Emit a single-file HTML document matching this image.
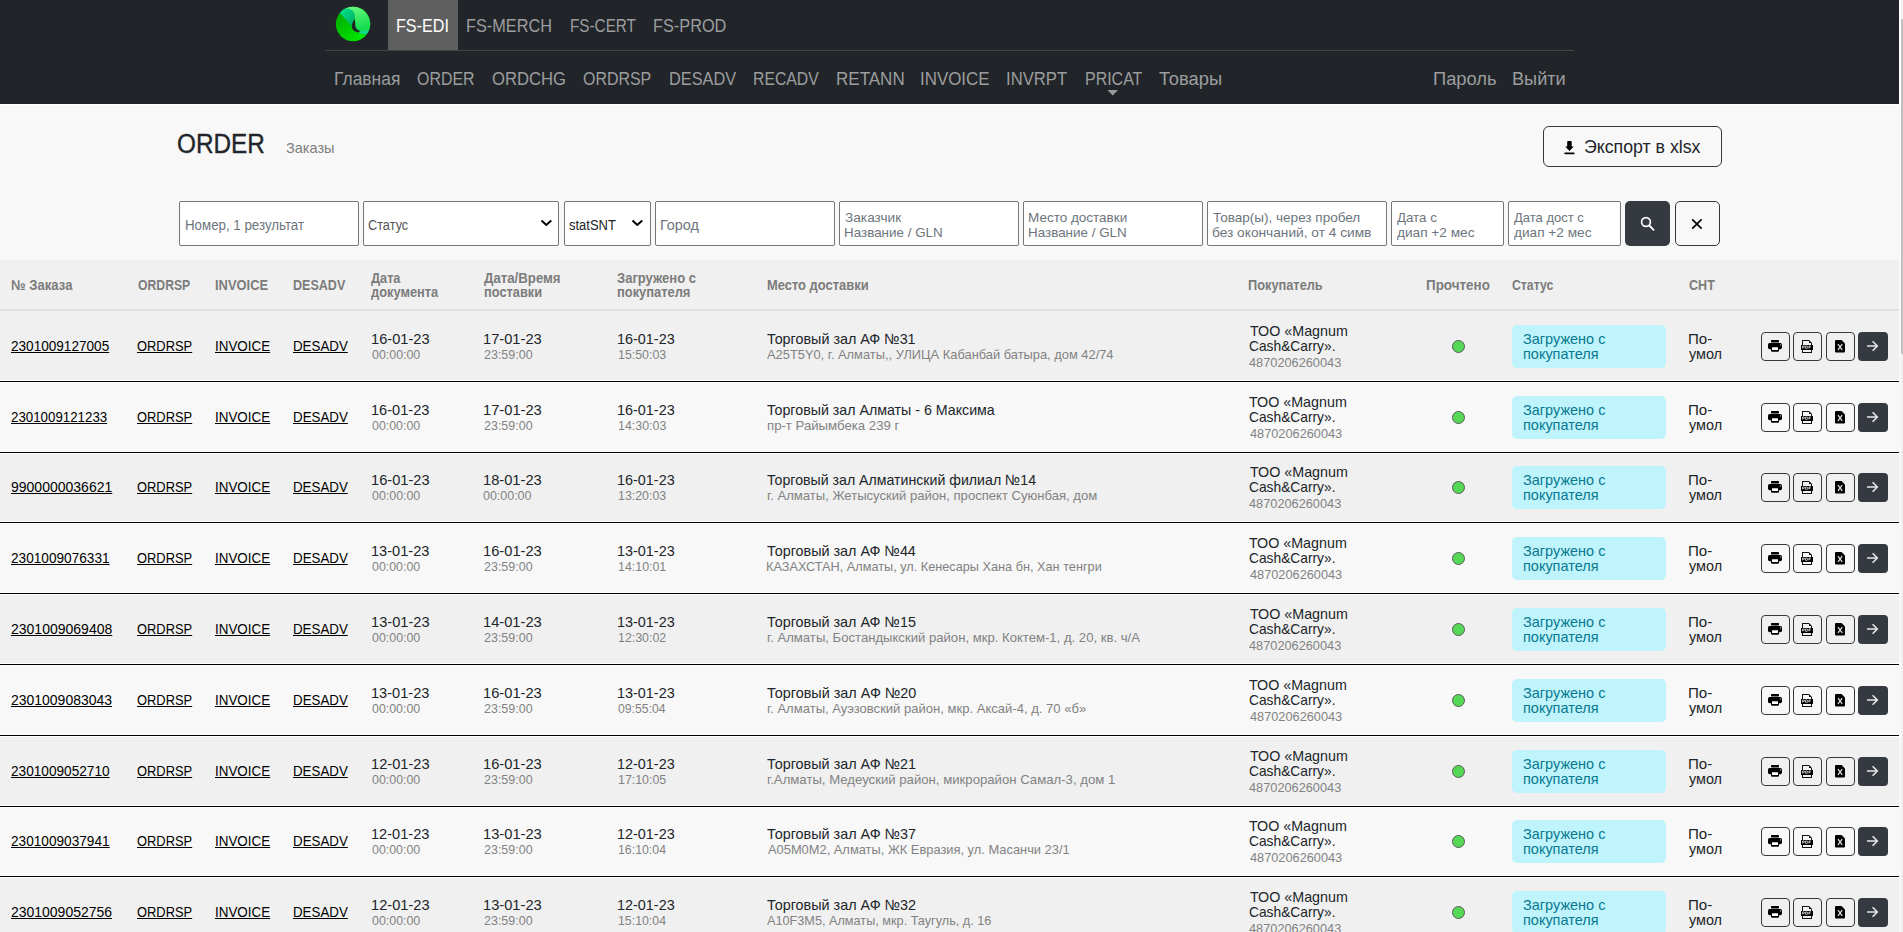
<!DOCTYPE html>
<html><head><meta charset="utf-8"><title>ORDER</title>
<style>
html,body{margin:0;padding:0;}
body{width:1903px;height:932px;overflow:hidden;position:relative;background:#f8f8f8;font-family:"Liberation Sans",sans-serif;}
.t{position:absolute;white-space:nowrap;line-height:1;transform-origin:0 0;}
.r{position:absolute;}
</style></head><body>
<div class="r" style="left:0px;top:0px;width:1899px;height:104px;background:#212529;"></div>
<div class="r" style="left:0px;top:104px;width:1899px;height:1px;background:#ffffff;"></div>
<div class="r" style="left:1899px;top:0px;width:2px;height:105px;background:#ffffff;"></div>
<div class="r" style="left:1901px;top:0px;width:2px;height:932px;background:#f1f1f1;"></div>
<div class="r" style="left:1901px;top:19px;width:2px;height:335px;background:#c1c1c1;"></div>
<svg class="r" style="left:335px;top:6px" width="36" height="36" viewBox="0 0 36 36">
<defs>
<linearGradient id="g1" x1="0" y1="0" x2="0.8" y2="1"><stop offset="0" stop-color="#009e00"/><stop offset="1" stop-color="#00ee00"/></linearGradient>
<linearGradient id="g2" x1="0" y1="0" x2="0.3" y2="1"><stop offset="0" stop-color="#74fb84"/><stop offset="1" stop-color="#14de50"/></linearGradient>
<linearGradient id="g3" x1="0" y1="0" x2="1" y2="1"><stop offset="0" stop-color="#00ec90"/><stop offset="1" stop-color="#00a860"/></linearGradient>
<clipPath id="cc"><circle cx="18" cy="18" r="17.2"/></clipPath>
</defs>
<g clip-path="url(#cc)">
<rect x="0" y="0" width="36" height="36" fill="url(#g1)"/>
<path d="M2 4 C6 1 15 0 19 6 C20.5 9 20 12 19.4 13.2 C17.8 15.5 16.8 18 16.8 20.6 C12 15 7 9 2 4Z" fill="url(#g3)"/>
<path d="M10 2.5 C15 2 19 4.5 19.7 8.5 C20.3 12 20.2 16 20.3 19.5 C20.5 22.5 23 24.6 25.6 25 C29 25.5 32 25 36 23.5 L36 -1 L10 -1Z" fill="url(#g2)"/>
<path d="M19.4 13.2 C17.8 15.5 16.8 18 16.8 20.6 C16.8 23.8 19.8 26 23.6 26.6 L25.6 25 C23 24.6 20.5 22.5 20.3 19.5 C20.2 17 20.2 15 19.4 13.2Z" fill="#212529"/>
<path d="M23.6 26.6 C27.5 28.6 32 28.4 36 26.6 L36 23.5 C32 25 29 25.5 25.6 25Z" fill="#19d49a"/>
</g>
</svg>
<div class="r" style="left:388px;top:0px;width:70px;height:50px;background:#5f5f5f;"></div>
<div class="r" style="left:325px;top:50px;width:1249px;height:1px;background:#444444;"></div>
<div class="t" style="left:396.42px;top:17px;font-size:18px;color:#ffffff;transform:scaleX(0.8965);">FS-EDI</div>
<div class="t" style="left:466.45px;top:17px;font-size:18px;color:#9c9d9f;transform:scaleX(0.9041);">FS-MERCH</div>
<div class="t" style="left:569.54px;top:17px;font-size:18px;color:#9c9d9f;transform:scaleX(0.8489);">FS-CERT</div>
<div class="t" style="left:653.45px;top:17px;font-size:18px;color:#9c9d9f;transform:scaleX(0.9061);">FS-PROD</div>
<div class="t" style="left:333.52px;top:70px;font-size:18px;color:#9c9d9f;transform:scaleX(0.9688);">Главная</div>
<div class="t" style="left:417.36px;top:70px;font-size:18px;color:#9c9d9f;transform:scaleX(0.8861);">ORDER</div>
<div class="t" style="left:491.69px;top:70px;font-size:18px;color:#9c9d9f;transform:scaleX(0.9259);">ORDCHG</div>
<div class="t" style="left:582.83px;top:70px;font-size:18px;color:#9c9d9f;transform:scaleX(0.8862);">ORDRSP</div>
<div class="t" style="left:668.62px;top:70px;font-size:18px;color:#9c9d9f;transform:scaleX(0.9055);">DESADV</div>
<div class="t" style="left:753.35px;top:70px;font-size:18px;color:#9c9d9f;transform:scaleX(0.8760);">RECADV</div>
<div class="t" style="left:835.51px;top:70px;font-size:18px;color:#9c9d9f;transform:scaleX(0.9450);">RETANN</div>
<div class="t" style="left:920.32px;top:70px;font-size:18px;color:#9c9d9f;transform:scaleX(0.9390);">INVOICE</div>
<div class="t" style="left:1006.25px;top:70px;font-size:18px;color:#9c9d9f;transform:scaleX(0.9249);">INVRPT</div>
<div class="t" style="left:1084.59px;top:70px;font-size:18px;color:#9c9d9f;transform:scaleX(0.8866);">PRICAT</div>
<div class="t" style="left:1159.47px;top:70px;font-size:18px;color:#9c9d9f;transform:scaleX(1.0190);">Товары</div>
<div class="t" style="left:1432.52px;top:70px;font-size:18px;color:#9c9d9f;transform:scaleX(1.0184);">Пароль</div>
<div class="t" style="left:1512.25px;top:70px;font-size:18px;color:#9c9d9f;transform:scaleX(1.0077);">Выйти</div>
<svg class="r" style="left:1107px;top:90px" width="12" height="6" viewBox="0 0 12 6"><path d="M0.5 0 L11 0 L5.75 5.5Z" fill="#999"/></svg>
<div class="t" style="left:177.28px;top:131px;font-size:27px;color:#212529;transform:scaleX(0.9012);-webkit-text-stroke:0.35px #212529;">ORDER</div>
<div class="t" style="left:286.25px;top:140px;font-size:15px;color:#7d7d7d;transform:scaleX(0.9688);">Заказы</div>
<div class="r" style="left:1543px;top:126px;width:179px;height:41px;background:transparent;border:1px solid #343a40;border-radius:6px;box-sizing:border-box;"></div>
<svg class="r" style="left:1563px;top:140px" width="14" height="15" viewBox="0 0 14 15"><path d="M4.2 1.8 Q4.2 1 5 1 H7.9 Q8.7 1 8.7 1.8 V6.4 H10.7 L6.45 10.9 L2.2 6.4 H4.2Z" fill="#000"/><rect x="1.3" y="12.5" width="10.3" height="1.7" rx="0.8" fill="#000"/></svg>
<div class="t" style="left:1584.37px;top:138px;font-size:18px;color:#212529;transform:scaleX(0.9849);">Экспорт в xlsx</div>
<div class="r" style="left:179px;top:201px;width:180px;height:45px;background:#fff;border:1px solid #767676;border-radius:2px;box-sizing:border-box;"></div>
<div class="t" style="left:185.28px;top:218px;font-size:14px;color:#6c757d;transform:scaleX(0.9502);">Номер, 1 результат</div>
<div class="r" style="left:363px;top:201px;width:196px;height:45px;background:#fff;border:1px solid #767676;border-radius:2px;box-sizing:border-box;"></div>
<div class="t" style="left:368.28px;top:218px;font-size:14px;color:#555;transform:scaleX(0.9087);">Статус</div>
<svg class="r" style="left:540px;top:219px" width="13" height="8" viewBox="0 0 13 8"><path d="M1.5 1.5 L6.3 6 L11.3 1.5" stroke="#000" stroke-width="2" fill="none"/></svg>
<div class="r" style="left:564px;top:201px;width:87px;height:45px;background:#fff;border:1px solid #767676;border-radius:2px;box-sizing:border-box;"></div>
<div class="t" style="left:569.43px;top:218px;font-size:14px;color:#212529;transform:scaleX(0.9254);">statSNT</div>
<svg class="r" style="left:631px;top:219px" width="13" height="8" viewBox="0 0 13 8"><path d="M1.5 1.5 L6.3 6 L11.3 1.5" stroke="#000" stroke-width="2" fill="none"/></svg>
<div class="r" style="left:655px;top:201px;width:180px;height:45px;background:#fff;border:1px solid #767676;border-radius:2px;box-sizing:border-box;"></div>
<div class="t" style="left:659.64px;top:218px;font-size:14px;color:#6c757d;transform:scaleX(1.0293);">Город</div>
<div class="r" style="left:839px;top:201px;width:180px;height:45px;background:#fff;border:1px solid #767676;border-radius:2px;box-sizing:border-box;"></div>
<div class="t" style="left:844.60px;top:211px;font-size:13px;color:#6c757d;transform:scaleX(1.0511);">Заказчик</div>
<div class="t" style="left:844.28px;top:226px;font-size:13px;color:#6c757d;transform:scaleX(1.0326);">Название / GLN</div>
<div class="r" style="left:1023px;top:201px;width:180px;height:45px;background:#fff;border:1px solid #767676;border-radius:2px;box-sizing:border-box;"></div>
<div class="t" style="left:1028.28px;top:211px;font-size:13px;color:#6c757d;transform:scaleX(1.0379);">Место доставки</div>
<div class="t" style="left:1028.28px;top:226px;font-size:13px;color:#6c757d;transform:scaleX(1.0326);">Название / GLN</div>
<div class="r" style="left:1207px;top:201px;width:180px;height:45px;background:#fff;border:1px solid #767676;border-radius:2px;box-sizing:border-box;"></div>
<div class="t" style="left:1212.64px;top:211px;font-size:13px;color:#6c757d;transform:scaleX(1.0404);">Товар(ы), через пробел</div>
<div class="t" style="left:1212.20px;top:226px;font-size:13px;color:#6c757d;transform:scaleX(1.0543);">без окончаний, от 4 симв</div>
<div class="r" style="left:1391px;top:201px;width:113px;height:45px;background:#fff;border:1px solid #767676;border-radius:2px;box-sizing:border-box;"></div>
<div class="t" style="left:1396.84px;top:211px;font-size:13px;color:#6c757d;transform:scaleX(1.0225);">Дата с</div>
<div class="t" style="left:1396.62px;top:226px;font-size:13px;color:#6c757d;transform:scaleX(1.0499);">диап +2 мес</div>
<div class="r" style="left:1508px;top:201px;width:113px;height:45px;background:#fff;border:1px solid #767676;border-radius:2px;box-sizing:border-box;"></div>
<div class="t" style="left:1514.05px;top:211px;font-size:13px;color:#6c757d;">Дата дост с</div>
<div class="t" style="left:1513.62px;top:226px;font-size:13px;color:#6c757d;transform:scaleX(1.0499);">диап +2 мес</div>
<div class="r" style="left:1625px;top:201px;width:45px;height:45px;background:#343a40;border-radius:5px;"></div>
<svg class="r" style="left:1638px;top:214px" width="20" height="20" viewBox="0 0 20 20"><circle cx="8" cy="8" r="4.4" stroke="#fff" stroke-width="1.7" fill="none"/><path d="M11.3 11.5 L15.6 15.8" stroke="#fff" stroke-width="1.8" stroke-linecap="round"/></svg>
<div class="r" style="left:1675px;top:201px;width:45px;height:45px;background:transparent;border:1px solid #343a40;border-radius:5px;box-sizing:border-box;"></div>
<svg class="r" style="left:1690px;top:217px" width="14" height="14" viewBox="0 0 14 14"><path d="M2.2 2.4 L11.6 11.6 M11.6 2.4 L2.2 11.6" stroke="#000" stroke-width="1.7"/></svg>
<div class="r" style="left:0px;top:260px;width:1899px;height:49px;background:#f0f0f0;"></div>
<div class="r" style="left:0px;top:309px;width:1899px;height:2px;background:#dee2e6;"></div>
<div class="t" style="left:10.74px;top:278px;font-size:14px;color:#7c7c7c;font-weight:bold;transform:scaleX(0.9367);">№ Заказа</div>
<div class="t" style="left:137.52px;top:278px;font-size:14px;color:#7c7c7c;font-weight:bold;transform:scaleX(0.8721);">ORDRSP</div>
<div class="t" style="left:214.83px;top:278px;font-size:14px;color:#7c7c7c;font-weight:bold;transform:scaleX(0.9219);">INVOICE</div>
<div class="t" style="left:293.37px;top:278px;font-size:14px;color:#7c7c7c;font-weight:bold;transform:scaleX(0.8954);">DESADV</div>
<div class="t" style="left:767.36px;top:278px;font-size:14px;color:#7c7c7c;font-weight:bold;transform:scaleX(0.9228);">Место доставки</div>
<div class="t" style="left:1248.43px;top:278px;font-size:14px;color:#7c7c7c;font-weight:bold;transform:scaleX(0.9137);">Покупатель</div>
<div class="t" style="left:1426.39px;top:278px;font-size:14px;color:#7c7c7c;font-weight:bold;transform:scaleX(0.9588);">Прочтено</div>
<div class="t" style="left:1511.78px;top:278px;font-size:14px;color:#7c7c7c;font-weight:bold;transform:scaleX(0.8739);">Статус</div>
<div class="t" style="left:1688.52px;top:278px;font-size:14px;color:#7c7c7c;font-weight:bold;transform:scaleX(0.8976);">СНТ</div>
<div class="t" style="left:370.77px;top:271px;font-size:14px;color:#7c7c7c;font-weight:bold;transform:scaleX(0.9088);">Дата</div>
<div class="t" style="left:370.95px;top:285px;font-size:14px;color:#7c7c7c;font-weight:bold;transform:scaleX(0.9177);">документа</div>
<div class="t" style="left:483.66px;top:271px;font-size:14px;color:#7c7c7c;font-weight:bold;transform:scaleX(0.9446);">Дата/Время</div>
<div class="t" style="left:483.66px;top:285px;font-size:14px;color:#7c7c7c;font-weight:bold;transform:scaleX(0.9145);">поставки</div>
<div class="t" style="left:617.39px;top:271px;font-size:14px;color:#7c7c7c;font-weight:bold;transform:scaleX(0.9304);">Загружено с</div>
<div class="t" style="left:616.63px;top:285px;font-size:14px;color:#7c7c7c;font-weight:bold;transform:scaleX(0.9200);">покупателя</div>
<div class="r" style="left:0px;top:311px;width:1899px;height:69px;background:#f0f0f0;"></div>
<div class="r" style="left:0px;top:380px;width:1899px;height:3px;background:#ffffff;"></div>
<div class="r" style="left:0px;top:381px;width:1899px;height:1px;background:#000000;"></div>
<div class="t" style="left:11.36px;top:338px;font-size:15px;color:#000;text-decoration:underline;text-underline-offset:1px;text-decoration-thickness:1.3px;transform:scaleX(0.9053);">2301009127005</div>
<div class="t" style="left:137.47px;top:338px;font-size:15px;color:#000;text-decoration:underline;text-underline-offset:1px;text-decoration-thickness:1.3px;transform:scaleX(0.8597);">ORDRSP</div>
<div class="t" style="left:215.48px;top:338px;font-size:15px;color:#000;text-decoration:underline;text-underline-offset:1px;text-decoration-thickness:1.3px;transform:scaleX(0.8931);">INVOICE</div>
<div class="t" style="left:293.35px;top:338px;font-size:15px;color:#000;text-decoration:underline;text-underline-offset:1px;text-decoration-thickness:1.3px;transform:scaleX(0.8885);">DESADV</div>
<div class="t" style="left:370.61px;top:331px;font-size:15px;color:#212529;transform:scaleX(0.9748);">16-01-23</div>
<div class="t" style="left:371.53px;top:348px;font-size:13px;color:#828282;transform:scaleX(0.9539);">00:00:00</div>
<div class="t" style="left:483.21px;top:331px;font-size:15px;color:#212529;transform:scaleX(0.9783);">17-01-23</div>
<div class="t" style="left:483.73px;top:348px;font-size:13px;color:#828282;transform:scaleX(0.9599);">23:59:00</div>
<div class="t" style="left:617.42px;top:331px;font-size:15px;color:#212529;transform:scaleX(0.9602);">16-01-23</div>
<div class="t" style="left:617.55px;top:348px;font-size:13px;color:#828282;transform:scaleX(0.9531);">15:50:03</div>
<div class="t" style="left:767.31px;top:331px;font-size:15px;color:#212529;transform:scaleX(0.9558);">Торговый зал АФ №31</div>
<div class="t" style="left:767.40px;top:348px;font-size:13px;color:#828282;transform:scaleX(0.9893);">A25T5Y0, г. Алматы,, УЛИЦА Кабанбай батыра, дом 42/74</div>
<div class="t" style="left:1249.59px;top:323px;font-size:15px;color:#212529;transform:scaleX(0.9525);">ТОО «Magnum</div>
<div class="t" style="left:1248.70px;top:338px;font-size:15px;color:#212529;transform:scaleX(0.9181);">Cash&amp;Carry».</div>
<div class="t" style="left:1249.49px;top:356px;font-size:13px;color:#828282;transform:scaleX(0.9815);">4870206260043</div>
<div class="r" style="left:1452px;top:340px;width:13px;height:13px;border-radius:50%;background:#55d855;border:1px solid #5a5a5a;box-sizing:border-box"></div>
<div class="r" style="left:1512px;top:325px;width:154px;height:43px;background:#bff4fc;border-radius:5px;"></div>
<div class="t" style="left:1523.43px;top:331px;font-size:15px;color:#087990;transform:scaleX(0.9655);">Загружено с</div>
<div class="t" style="left:1523.28px;top:346px;font-size:15px;color:#087990;transform:scaleX(0.9649);">покупателя</div>
<div class="t" style="left:1688.15px;top:331px;font-size:15px;color:#212529;transform:scaleX(1.0068);">По-</div>
<div class="t" style="left:1689.09px;top:346px;font-size:15px;color:#212529;transform:scaleX(0.9596);">умол</div>
<div class="r" style="left:1761px;top:332px;width:29px;height:29px;background:transparent;border:1px solid #343a40;border-radius:4px;box-sizing:border-box;"></div>
<div class="r" style="left:1793px;top:332px;width:29px;height:29px;background:transparent;border:1px solid #343a40;border-radius:4px;box-sizing:border-box;"></div>
<div class="r" style="left:1826px;top:332px;width:29px;height:29px;background:transparent;border:1px solid #343a40;border-radius:4px;box-sizing:border-box;"></div>
<div class="r" style="left:1858px;top:332px;width:30px;height:29px;background:#343a40;border-radius:4px;"></div>
<svg class="r" style="left:1761px;top:332px" width="29" height="29" viewBox="0 0 29 29"><rect x="10" y="8" width="8" height="2.4" rx="0.6" fill="#000"/><rect x="7" y="11" width="14" height="6.2" rx="1.6" fill="#000"/><rect x="10" y="14.5" width="8" height="5.2" rx="1.2" fill="#000"/><rect x="11" y="15.3" width="6" height="2.8" rx="0.3" fill="#fff"/><rect x="19.3" y="12.2" width="0.8" height="1.4" fill="#ddd"/></svg>
<svg class="r" style="left:1793px;top:332px" width="29" height="29" viewBox="0 0 29 29" shape-rendering="crispEdges"><path d="M9 8 H16 V9 H10 V20 H18 V11 H19 V21 H9Z" fill="#111"/><path d="M16 8 L19 11 L16 11Z" fill="#000" shape-rendering="auto"/><rect x="8" y="13" width="12" height="4.6" fill="#000"/><path d="M9.6 16.4 V14 H10.8 Q11.6 14 11.6 14.7 Q11.6 15.4 10.8 15.4 H9.6 M12.6 16.4 V14 H13.6 Q14.8 14 14.8 15.2 Q14.8 16.4 13.6 16.4Z M16 16.4 V14 H17.8 M16 15.2 H17.4" stroke="#e8e8e8" stroke-width="0.8" fill="none" shape-rendering="auto"/></svg>
<svg class="r" style="left:1826px;top:332px" width="29" height="29" viewBox="0 0 29 29"><path d="M10 8 H15.6 L19 11.6 V19.6 Q19 20.6 18 20.6 H10 Q9 20.6 9 19.6 V9 Q9 8 10 8Z" fill="#000"/><path d="M12 12.2 L16.2 17.9 M16.2 12.2 L12 17.9" stroke="#dcdcdc" stroke-width="1.3"/></svg>
<svg class="r" style="left:1858px;top:332px" width="30" height="29" viewBox="0 0 30 29"><path d="M9 14 H19.2 M14.6 9.3 L19.3 14 L14.6 18.7" stroke="#e6e6e6" stroke-width="1.6" fill="none"/></svg>
<div class="r" style="left:0px;top:383px;width:1899px;height:68px;background:#f8f8f8;"></div>
<div class="r" style="left:0px;top:451px;width:1899px;height:3px;background:#ffffff;"></div>
<div class="r" style="left:0px;top:452px;width:1899px;height:1px;background:#000000;"></div>
<div class="t" style="left:11.36px;top:409px;font-size:15px;color:#000;text-decoration:underline;text-underline-offset:1px;text-decoration-thickness:1.3px;transform:scaleX(0.8868);">2301009121233</div>
<div class="t" style="left:137.47px;top:409px;font-size:15px;color:#000;text-decoration:underline;text-underline-offset:1px;text-decoration-thickness:1.3px;transform:scaleX(0.8597);">ORDRSP</div>
<div class="t" style="left:215.48px;top:409px;font-size:15px;color:#000;text-decoration:underline;text-underline-offset:1px;text-decoration-thickness:1.3px;transform:scaleX(0.8930);">INVOICE</div>
<div class="t" style="left:293.35px;top:409px;font-size:15px;color:#000;text-decoration:underline;text-underline-offset:1px;text-decoration-thickness:1.3px;transform:scaleX(0.8886);">DESADV</div>
<div class="t" style="left:370.60px;top:402px;font-size:15px;color:#212529;transform:scaleX(0.9726);">16-01-23</div>
<div class="t" style="left:371.54px;top:419px;font-size:13px;color:#828282;transform:scaleX(0.9532);">00:00:00</div>
<div class="t" style="left:483.20px;top:402px;font-size:15px;color:#212529;transform:scaleX(0.9785);">17-01-23</div>
<div class="t" style="left:483.73px;top:419px;font-size:13px;color:#828282;transform:scaleX(0.9597);">23:59:00</div>
<div class="t" style="left:617.39px;top:402px;font-size:15px;color:#212529;transform:scaleX(0.9604);">16-01-23</div>
<div class="t" style="left:617.54px;top:419px;font-size:13px;color:#828282;transform:scaleX(0.9545);">14:30:03</div>
<div class="t" style="left:767.34px;top:402px;font-size:15px;color:#212529;transform:scaleX(0.9472);">Торговый зал Алматы - 6 Максима</div>
<div class="t" style="left:767.08px;top:419px;font-size:13px;color:#828282;transform:scaleX(1.0143);">пр-т Райымбека 239 г</div>
<div class="t" style="left:1249.22px;top:394px;font-size:15px;color:#212529;transform:scaleX(0.9522);">ТОО «Magnum</div>
<div class="t" style="left:1248.73px;top:409px;font-size:15px;color:#212529;transform:scaleX(0.9180);">Cash&amp;Carry».</div>
<div class="t" style="left:1249.53px;top:427px;font-size:13px;color:#828282;transform:scaleX(0.9809);">4870206260043</div>
<div class="r" style="left:1452px;top:411px;width:13px;height:13px;border-radius:50%;background:#55d855;border:1px solid #5a5a5a;box-sizing:border-box"></div>
<div class="r" style="left:1512px;top:396px;width:154px;height:43px;background:#bff4fc;border-radius:5px;"></div>
<div class="t" style="left:1523.43px;top:402px;font-size:15px;color:#087990;transform:scaleX(0.9655);">Загружено с</div>
<div class="t" style="left:1523.28px;top:417px;font-size:15px;color:#087990;transform:scaleX(0.9649);">покупателя</div>
<div class="t" style="left:1688.16px;top:402px;font-size:15px;color:#212529;transform:scaleX(1.0070);">По-</div>
<div class="t" style="left:1689.06px;top:417px;font-size:15px;color:#212529;transform:scaleX(0.9605);">умол</div>
<div class="r" style="left:1761px;top:403px;width:29px;height:29px;background:transparent;border:1px solid #343a40;border-radius:4px;box-sizing:border-box;"></div>
<div class="r" style="left:1793px;top:403px;width:29px;height:29px;background:transparent;border:1px solid #343a40;border-radius:4px;box-sizing:border-box;"></div>
<div class="r" style="left:1826px;top:403px;width:29px;height:29px;background:transparent;border:1px solid #343a40;border-radius:4px;box-sizing:border-box;"></div>
<div class="r" style="left:1858px;top:403px;width:30px;height:29px;background:#343a40;border-radius:4px;"></div>
<svg class="r" style="left:1761px;top:403px" width="29" height="29" viewBox="0 0 29 29"><rect x="10" y="8" width="8" height="2.4" rx="0.6" fill="#000"/><rect x="7" y="11" width="14" height="6.2" rx="1.6" fill="#000"/><rect x="10" y="14.5" width="8" height="5.2" rx="1.2" fill="#000"/><rect x="11" y="15.3" width="6" height="2.8" rx="0.3" fill="#fff"/><rect x="19.3" y="12.2" width="0.8" height="1.4" fill="#ddd"/></svg>
<svg class="r" style="left:1793px;top:403px" width="29" height="29" viewBox="0 0 29 29" shape-rendering="crispEdges"><path d="M9 8 H16 V9 H10 V20 H18 V11 H19 V21 H9Z" fill="#111"/><path d="M16 8 L19 11 L16 11Z" fill="#000" shape-rendering="auto"/><rect x="8" y="13" width="12" height="4.6" fill="#000"/><path d="M9.6 16.4 V14 H10.8 Q11.6 14 11.6 14.7 Q11.6 15.4 10.8 15.4 H9.6 M12.6 16.4 V14 H13.6 Q14.8 14 14.8 15.2 Q14.8 16.4 13.6 16.4Z M16 16.4 V14 H17.8 M16 15.2 H17.4" stroke="#e8e8e8" stroke-width="0.8" fill="none" shape-rendering="auto"/></svg>
<svg class="r" style="left:1826px;top:403px" width="29" height="29" viewBox="0 0 29 29"><path d="M10 8 H15.6 L19 11.6 V19.6 Q19 20.6 18 20.6 H10 Q9 20.6 9 19.6 V9 Q9 8 10 8Z" fill="#000"/><path d="M12 12.2 L16.2 17.9 M16.2 12.2 L12 17.9" stroke="#dcdcdc" stroke-width="1.3"/></svg>
<svg class="r" style="left:1858px;top:403px" width="30" height="29" viewBox="0 0 30 29"><path d="M9 14 H19.2 M14.6 9.3 L19.3 14 L14.6 18.7" stroke="#e6e6e6" stroke-width="1.6" fill="none"/></svg>
<div class="r" style="left:0px;top:454px;width:1899px;height:67px;background:#f0f0f0;"></div>
<div class="r" style="left:0px;top:521px;width:1899px;height:3px;background:#ffffff;"></div>
<div class="r" style="left:0px;top:522px;width:1899px;height:1px;background:#000000;"></div>
<div class="t" style="left:11.36px;top:479px;font-size:15px;color:#000;text-decoration:underline;text-underline-offset:1px;text-decoration-thickness:1.3px;transform:scaleX(0.9338);">9900000036621</div>
<div class="t" style="left:137.47px;top:479px;font-size:15px;color:#000;text-decoration:underline;text-underline-offset:1px;text-decoration-thickness:1.3px;transform:scaleX(0.8597);">ORDRSP</div>
<div class="t" style="left:215.48px;top:479px;font-size:15px;color:#000;text-decoration:underline;text-underline-offset:1px;text-decoration-thickness:1.3px;transform:scaleX(0.8931);">INVOICE</div>
<div class="t" style="left:293.35px;top:479px;font-size:15px;color:#000;text-decoration:underline;text-underline-offset:1px;text-decoration-thickness:1.3px;transform:scaleX(0.8885);">DESADV</div>
<div class="t" style="left:370.61px;top:472px;font-size:15px;color:#212529;transform:scaleX(0.9748);">16-01-23</div>
<div class="t" style="left:371.53px;top:489px;font-size:13px;color:#828282;transform:scaleX(0.9539);">00:00:00</div>
<div class="t" style="left:483.21px;top:472px;font-size:15px;color:#212529;transform:scaleX(0.9783);">18-01-23</div>
<div class="t" style="left:483.49px;top:489px;font-size:13px;color:#828282;transform:scaleX(0.9568);">00:00:00</div>
<div class="t" style="left:617.42px;top:472px;font-size:15px;color:#212529;transform:scaleX(0.9602);">16-01-23</div>
<div class="t" style="left:617.55px;top:489px;font-size:13px;color:#828282;transform:scaleX(0.9531);">13:20:03</div>
<div class="t" style="left:767.31px;top:472px;font-size:15px;color:#212529;transform:scaleX(0.9436);">Торговый зал Алматинский филиал №14</div>
<div class="t" style="left:767.18px;top:489px;font-size:13px;color:#828282;transform:scaleX(1.0055);">г. Алматы, Жетысуский район, проспект Суюнбая, дом</div>
<div class="t" style="left:1249.59px;top:464px;font-size:15px;color:#212529;transform:scaleX(0.9525);">ТОО «Magnum</div>
<div class="t" style="left:1248.70px;top:479px;font-size:15px;color:#212529;transform:scaleX(0.9181);">Cash&amp;Carry».</div>
<div class="t" style="left:1249.49px;top:497px;font-size:13px;color:#828282;transform:scaleX(0.9815);">4870206260043</div>
<div class="r" style="left:1452px;top:481px;width:13px;height:13px;border-radius:50%;background:#55d855;border:1px solid #5a5a5a;box-sizing:border-box"></div>
<div class="r" style="left:1512px;top:466px;width:154px;height:43px;background:#bff4fc;border-radius:5px;"></div>
<div class="t" style="left:1523.43px;top:472px;font-size:15px;color:#087990;transform:scaleX(0.9655);">Загружено с</div>
<div class="t" style="left:1523.28px;top:487px;font-size:15px;color:#087990;transform:scaleX(0.9649);">покупателя</div>
<div class="t" style="left:1688.15px;top:472px;font-size:15px;color:#212529;transform:scaleX(1.0068);">По-</div>
<div class="t" style="left:1689.09px;top:487px;font-size:15px;color:#212529;transform:scaleX(0.9596);">умол</div>
<div class="r" style="left:1761px;top:473px;width:29px;height:29px;background:transparent;border:1px solid #343a40;border-radius:4px;box-sizing:border-box;"></div>
<div class="r" style="left:1793px;top:473px;width:29px;height:29px;background:transparent;border:1px solid #343a40;border-radius:4px;box-sizing:border-box;"></div>
<div class="r" style="left:1826px;top:473px;width:29px;height:29px;background:transparent;border:1px solid #343a40;border-radius:4px;box-sizing:border-box;"></div>
<div class="r" style="left:1858px;top:473px;width:30px;height:29px;background:#343a40;border-radius:4px;"></div>
<svg class="r" style="left:1761px;top:473px" width="29" height="29" viewBox="0 0 29 29"><rect x="10" y="8" width="8" height="2.4" rx="0.6" fill="#000"/><rect x="7" y="11" width="14" height="6.2" rx="1.6" fill="#000"/><rect x="10" y="14.5" width="8" height="5.2" rx="1.2" fill="#000"/><rect x="11" y="15.3" width="6" height="2.8" rx="0.3" fill="#fff"/><rect x="19.3" y="12.2" width="0.8" height="1.4" fill="#ddd"/></svg>
<svg class="r" style="left:1793px;top:473px" width="29" height="29" viewBox="0 0 29 29" shape-rendering="crispEdges"><path d="M9 8 H16 V9 H10 V20 H18 V11 H19 V21 H9Z" fill="#111"/><path d="M16 8 L19 11 L16 11Z" fill="#000" shape-rendering="auto"/><rect x="8" y="13" width="12" height="4.6" fill="#000"/><path d="M9.6 16.4 V14 H10.8 Q11.6 14 11.6 14.7 Q11.6 15.4 10.8 15.4 H9.6 M12.6 16.4 V14 H13.6 Q14.8 14 14.8 15.2 Q14.8 16.4 13.6 16.4Z M16 16.4 V14 H17.8 M16 15.2 H17.4" stroke="#e8e8e8" stroke-width="0.8" fill="none" shape-rendering="auto"/></svg>
<svg class="r" style="left:1826px;top:473px" width="29" height="29" viewBox="0 0 29 29"><path d="M10 8 H15.6 L19 11.6 V19.6 Q19 20.6 18 20.6 H10 Q9 20.6 9 19.6 V9 Q9 8 10 8Z" fill="#000"/><path d="M12 12.2 L16.2 17.9 M16.2 12.2 L12 17.9" stroke="#dcdcdc" stroke-width="1.3"/></svg>
<svg class="r" style="left:1858px;top:473px" width="30" height="29" viewBox="0 0 30 29"><path d="M9 14 H19.2 M14.6 9.3 L19.3 14 L14.6 18.7" stroke="#e6e6e6" stroke-width="1.6" fill="none"/></svg>
<div class="r" style="left:0px;top:524px;width:1899px;height:68px;background:#f8f8f8;"></div>
<div class="r" style="left:0px;top:592px;width:1899px;height:3px;background:#ffffff;"></div>
<div class="r" style="left:0px;top:593px;width:1899px;height:1px;background:#000000;"></div>
<div class="t" style="left:11.36px;top:550px;font-size:15px;color:#000;text-decoration:underline;text-underline-offset:1px;text-decoration-thickness:1.3px;transform:scaleX(0.9095);">2301009076331</div>
<div class="t" style="left:137.47px;top:550px;font-size:15px;color:#000;text-decoration:underline;text-underline-offset:1px;text-decoration-thickness:1.3px;transform:scaleX(0.8597);">ORDRSP</div>
<div class="t" style="left:215.48px;top:550px;font-size:15px;color:#000;text-decoration:underline;text-underline-offset:1px;text-decoration-thickness:1.3px;transform:scaleX(0.8930);">INVOICE</div>
<div class="t" style="left:293.35px;top:550px;font-size:15px;color:#000;text-decoration:underline;text-underline-offset:1px;text-decoration-thickness:1.3px;transform:scaleX(0.8886);">DESADV</div>
<div class="t" style="left:370.60px;top:543px;font-size:15px;color:#212529;transform:scaleX(0.9726);">13-01-23</div>
<div class="t" style="left:371.54px;top:560px;font-size:13px;color:#828282;transform:scaleX(0.9532);">00:00:00</div>
<div class="t" style="left:483.20px;top:543px;font-size:15px;color:#212529;transform:scaleX(0.9785);">16-01-23</div>
<div class="t" style="left:483.73px;top:560px;font-size:13px;color:#828282;transform:scaleX(0.9597);">23:59:00</div>
<div class="t" style="left:617.39px;top:543px;font-size:15px;color:#212529;transform:scaleX(0.9604);">13-01-23</div>
<div class="t" style="left:617.54px;top:560px;font-size:13px;color:#828282;transform:scaleX(0.9537);">14:10:01</div>
<div class="t" style="left:767.34px;top:543px;font-size:15px;color:#212529;transform:scaleX(0.9576);">Торговый зал АФ №44</div>
<div class="t" style="left:766.48px;top:560px;font-size:13px;color:#828282;transform:scaleX(0.9779);">КАЗАХСТАН, Алматы, ул. Кенесары Хана бн, Хан тенгри</div>
<div class="t" style="left:1249.22px;top:535px;font-size:15px;color:#212529;transform:scaleX(0.9522);">ТОО «Magnum</div>
<div class="t" style="left:1248.73px;top:550px;font-size:15px;color:#212529;transform:scaleX(0.9180);">Cash&amp;Carry».</div>
<div class="t" style="left:1249.53px;top:568px;font-size:13px;color:#828282;transform:scaleX(0.9809);">4870206260043</div>
<div class="r" style="left:1452px;top:552px;width:13px;height:13px;border-radius:50%;background:#55d855;border:1px solid #5a5a5a;box-sizing:border-box"></div>
<div class="r" style="left:1512px;top:537px;width:154px;height:43px;background:#bff4fc;border-radius:5px;"></div>
<div class="t" style="left:1523.43px;top:543px;font-size:15px;color:#087990;transform:scaleX(0.9655);">Загружено с</div>
<div class="t" style="left:1523.28px;top:558px;font-size:15px;color:#087990;transform:scaleX(0.9649);">покупателя</div>
<div class="t" style="left:1688.16px;top:543px;font-size:15px;color:#212529;transform:scaleX(1.0070);">По-</div>
<div class="t" style="left:1689.06px;top:558px;font-size:15px;color:#212529;transform:scaleX(0.9605);">умол</div>
<div class="r" style="left:1761px;top:544px;width:29px;height:29px;background:transparent;border:1px solid #343a40;border-radius:4px;box-sizing:border-box;"></div>
<div class="r" style="left:1793px;top:544px;width:29px;height:29px;background:transparent;border:1px solid #343a40;border-radius:4px;box-sizing:border-box;"></div>
<div class="r" style="left:1826px;top:544px;width:29px;height:29px;background:transparent;border:1px solid #343a40;border-radius:4px;box-sizing:border-box;"></div>
<div class="r" style="left:1858px;top:544px;width:30px;height:29px;background:#343a40;border-radius:4px;"></div>
<svg class="r" style="left:1761px;top:544px" width="29" height="29" viewBox="0 0 29 29"><rect x="10" y="8" width="8" height="2.4" rx="0.6" fill="#000"/><rect x="7" y="11" width="14" height="6.2" rx="1.6" fill="#000"/><rect x="10" y="14.5" width="8" height="5.2" rx="1.2" fill="#000"/><rect x="11" y="15.3" width="6" height="2.8" rx="0.3" fill="#fff"/><rect x="19.3" y="12.2" width="0.8" height="1.4" fill="#ddd"/></svg>
<svg class="r" style="left:1793px;top:544px" width="29" height="29" viewBox="0 0 29 29" shape-rendering="crispEdges"><path d="M9 8 H16 V9 H10 V20 H18 V11 H19 V21 H9Z" fill="#111"/><path d="M16 8 L19 11 L16 11Z" fill="#000" shape-rendering="auto"/><rect x="8" y="13" width="12" height="4.6" fill="#000"/><path d="M9.6 16.4 V14 H10.8 Q11.6 14 11.6 14.7 Q11.6 15.4 10.8 15.4 H9.6 M12.6 16.4 V14 H13.6 Q14.8 14 14.8 15.2 Q14.8 16.4 13.6 16.4Z M16 16.4 V14 H17.8 M16 15.2 H17.4" stroke="#e8e8e8" stroke-width="0.8" fill="none" shape-rendering="auto"/></svg>
<svg class="r" style="left:1826px;top:544px" width="29" height="29" viewBox="0 0 29 29"><path d="M10 8 H15.6 L19 11.6 V19.6 Q19 20.6 18 20.6 H10 Q9 20.6 9 19.6 V9 Q9 8 10 8Z" fill="#000"/><path d="M12 12.2 L16.2 17.9 M16.2 12.2 L12 17.9" stroke="#dcdcdc" stroke-width="1.3"/></svg>
<svg class="r" style="left:1858px;top:544px" width="30" height="29" viewBox="0 0 30 29"><path d="M9 14 H19.2 M14.6 9.3 L19.3 14 L14.6 18.7" stroke="#e6e6e6" stroke-width="1.6" fill="none"/></svg>
<div class="r" style="left:0px;top:595px;width:1899px;height:68px;background:#f0f0f0;"></div>
<div class="r" style="left:0px;top:663px;width:1899px;height:3px;background:#ffffff;"></div>
<div class="r" style="left:0px;top:664px;width:1899px;height:1px;background:#000000;"></div>
<div class="t" style="left:11.36px;top:621px;font-size:15px;color:#000;text-decoration:underline;text-underline-offset:1px;text-decoration-thickness:1.3px;transform:scaleX(0.9338);">2301009069408</div>
<div class="t" style="left:137.47px;top:621px;font-size:15px;color:#000;text-decoration:underline;text-underline-offset:1px;text-decoration-thickness:1.3px;transform:scaleX(0.8597);">ORDRSP</div>
<div class="t" style="left:215.48px;top:621px;font-size:15px;color:#000;text-decoration:underline;text-underline-offset:1px;text-decoration-thickness:1.3px;transform:scaleX(0.8931);">INVOICE</div>
<div class="t" style="left:293.35px;top:621px;font-size:15px;color:#000;text-decoration:underline;text-underline-offset:1px;text-decoration-thickness:1.3px;transform:scaleX(0.8885);">DESADV</div>
<div class="t" style="left:370.61px;top:614px;font-size:15px;color:#212529;transform:scaleX(0.9748);">13-01-23</div>
<div class="t" style="left:371.53px;top:631px;font-size:13px;color:#828282;transform:scaleX(0.9539);">00:00:00</div>
<div class="t" style="left:483.21px;top:614px;font-size:15px;color:#212529;transform:scaleX(0.9783);">14-01-23</div>
<div class="t" style="left:483.73px;top:631px;font-size:13px;color:#828282;transform:scaleX(0.9599);">23:59:00</div>
<div class="t" style="left:617.42px;top:614px;font-size:15px;color:#212529;transform:scaleX(0.9602);">13-01-23</div>
<div class="t" style="left:617.55px;top:631px;font-size:13px;color:#828282;transform:scaleX(0.9519);">12:30:02</div>
<div class="t" style="left:767.31px;top:614px;font-size:15px;color:#212529;transform:scaleX(0.9578);">Торговый зал АФ №15</div>
<div class="t" style="left:767.04px;top:631px;font-size:13px;color:#828282;transform:scaleX(1.0084);">г. Алматы, Бостандыкский район, мкр. Коктем-1, д. 20, кв. ч/А</div>
<div class="t" style="left:1249.59px;top:606px;font-size:15px;color:#212529;transform:scaleX(0.9525);">ТОО «Magnum</div>
<div class="t" style="left:1248.70px;top:621px;font-size:15px;color:#212529;transform:scaleX(0.9181);">Cash&amp;Carry».</div>
<div class="t" style="left:1249.49px;top:639px;font-size:13px;color:#828282;transform:scaleX(0.9815);">4870206260043</div>
<div class="r" style="left:1452px;top:623px;width:13px;height:13px;border-radius:50%;background:#55d855;border:1px solid #5a5a5a;box-sizing:border-box"></div>
<div class="r" style="left:1512px;top:608px;width:154px;height:43px;background:#bff4fc;border-radius:5px;"></div>
<div class="t" style="left:1523.43px;top:614px;font-size:15px;color:#087990;transform:scaleX(0.9655);">Загружено с</div>
<div class="t" style="left:1523.28px;top:629px;font-size:15px;color:#087990;transform:scaleX(0.9649);">покупателя</div>
<div class="t" style="left:1688.15px;top:614px;font-size:15px;color:#212529;transform:scaleX(1.0068);">По-</div>
<div class="t" style="left:1689.09px;top:629px;font-size:15px;color:#212529;transform:scaleX(0.9596);">умол</div>
<div class="r" style="left:1761px;top:615px;width:29px;height:29px;background:transparent;border:1px solid #343a40;border-radius:4px;box-sizing:border-box;"></div>
<div class="r" style="left:1793px;top:615px;width:29px;height:29px;background:transparent;border:1px solid #343a40;border-radius:4px;box-sizing:border-box;"></div>
<div class="r" style="left:1826px;top:615px;width:29px;height:29px;background:transparent;border:1px solid #343a40;border-radius:4px;box-sizing:border-box;"></div>
<div class="r" style="left:1858px;top:615px;width:30px;height:29px;background:#343a40;border-radius:4px;"></div>
<svg class="r" style="left:1761px;top:615px" width="29" height="29" viewBox="0 0 29 29"><rect x="10" y="8" width="8" height="2.4" rx="0.6" fill="#000"/><rect x="7" y="11" width="14" height="6.2" rx="1.6" fill="#000"/><rect x="10" y="14.5" width="8" height="5.2" rx="1.2" fill="#000"/><rect x="11" y="15.3" width="6" height="2.8" rx="0.3" fill="#fff"/><rect x="19.3" y="12.2" width="0.8" height="1.4" fill="#ddd"/></svg>
<svg class="r" style="left:1793px;top:615px" width="29" height="29" viewBox="0 0 29 29" shape-rendering="crispEdges"><path d="M9 8 H16 V9 H10 V20 H18 V11 H19 V21 H9Z" fill="#111"/><path d="M16 8 L19 11 L16 11Z" fill="#000" shape-rendering="auto"/><rect x="8" y="13" width="12" height="4.6" fill="#000"/><path d="M9.6 16.4 V14 H10.8 Q11.6 14 11.6 14.7 Q11.6 15.4 10.8 15.4 H9.6 M12.6 16.4 V14 H13.6 Q14.8 14 14.8 15.2 Q14.8 16.4 13.6 16.4Z M16 16.4 V14 H17.8 M16 15.2 H17.4" stroke="#e8e8e8" stroke-width="0.8" fill="none" shape-rendering="auto"/></svg>
<svg class="r" style="left:1826px;top:615px" width="29" height="29" viewBox="0 0 29 29"><path d="M10 8 H15.6 L19 11.6 V19.6 Q19 20.6 18 20.6 H10 Q9 20.6 9 19.6 V9 Q9 8 10 8Z" fill="#000"/><path d="M12 12.2 L16.2 17.9 M16.2 12.2 L12 17.9" stroke="#dcdcdc" stroke-width="1.3"/></svg>
<svg class="r" style="left:1858px;top:615px" width="30" height="29" viewBox="0 0 30 29"><path d="M9 14 H19.2 M14.6 9.3 L19.3 14 L14.6 18.7" stroke="#e6e6e6" stroke-width="1.6" fill="none"/></svg>
<div class="r" style="left:0px;top:666px;width:1899px;height:68px;background:#f8f8f8;"></div>
<div class="r" style="left:0px;top:734px;width:1899px;height:3px;background:#ffffff;"></div>
<div class="r" style="left:0px;top:735px;width:1899px;height:1px;background:#000000;"></div>
<div class="t" style="left:11.36px;top:692px;font-size:15px;color:#000;text-decoration:underline;text-underline-offset:1px;text-decoration-thickness:1.3px;transform:scaleX(0.9313);">2301009083043</div>
<div class="t" style="left:137.47px;top:692px;font-size:15px;color:#000;text-decoration:underline;text-underline-offset:1px;text-decoration-thickness:1.3px;transform:scaleX(0.8597);">ORDRSP</div>
<div class="t" style="left:215.48px;top:692px;font-size:15px;color:#000;text-decoration:underline;text-underline-offset:1px;text-decoration-thickness:1.3px;transform:scaleX(0.8930);">INVOICE</div>
<div class="t" style="left:293.35px;top:692px;font-size:15px;color:#000;text-decoration:underline;text-underline-offset:1px;text-decoration-thickness:1.3px;transform:scaleX(0.8886);">DESADV</div>
<div class="t" style="left:370.60px;top:685px;font-size:15px;color:#212529;transform:scaleX(0.9726);">13-01-23</div>
<div class="t" style="left:371.54px;top:702px;font-size:13px;color:#828282;transform:scaleX(0.9532);">00:00:00</div>
<div class="t" style="left:483.20px;top:685px;font-size:15px;color:#212529;transform:scaleX(0.9785);">16-01-23</div>
<div class="t" style="left:483.73px;top:702px;font-size:13px;color:#828282;transform:scaleX(0.9597);">23:59:00</div>
<div class="t" style="left:617.39px;top:685px;font-size:15px;color:#212529;transform:scaleX(0.9604);">13-01-23</div>
<div class="t" style="left:617.50px;top:702px;font-size:13px;color:#828282;transform:scaleX(0.9421);">09:55:04</div>
<div class="t" style="left:767.34px;top:685px;font-size:15px;color:#212529;transform:scaleX(0.9609);">Торговый зал АФ №20</div>
<div class="t" style="left:766.99px;top:702px;font-size:13px;color:#828282;transform:scaleX(1.0037);">г. Алматы, Ауэзовский район, мкр. Аксай-4, д. 70 «б»</div>
<div class="t" style="left:1249.22px;top:677px;font-size:15px;color:#212529;transform:scaleX(0.9522);">ТОО «Magnum</div>
<div class="t" style="left:1248.73px;top:692px;font-size:15px;color:#212529;transform:scaleX(0.9180);">Cash&amp;Carry».</div>
<div class="t" style="left:1249.53px;top:710px;font-size:13px;color:#828282;transform:scaleX(0.9809);">4870206260043</div>
<div class="r" style="left:1452px;top:694px;width:13px;height:13px;border-radius:50%;background:#55d855;border:1px solid #5a5a5a;box-sizing:border-box"></div>
<div class="r" style="left:1512px;top:679px;width:154px;height:43px;background:#bff4fc;border-radius:5px;"></div>
<div class="t" style="left:1523.43px;top:685px;font-size:15px;color:#087990;transform:scaleX(0.9655);">Загружено с</div>
<div class="t" style="left:1523.28px;top:700px;font-size:15px;color:#087990;transform:scaleX(0.9649);">покупателя</div>
<div class="t" style="left:1688.16px;top:685px;font-size:15px;color:#212529;transform:scaleX(1.0070);">По-</div>
<div class="t" style="left:1689.06px;top:700px;font-size:15px;color:#212529;transform:scaleX(0.9605);">умол</div>
<div class="r" style="left:1761px;top:686px;width:29px;height:29px;background:transparent;border:1px solid #343a40;border-radius:4px;box-sizing:border-box;"></div>
<div class="r" style="left:1793px;top:686px;width:29px;height:29px;background:transparent;border:1px solid #343a40;border-radius:4px;box-sizing:border-box;"></div>
<div class="r" style="left:1826px;top:686px;width:29px;height:29px;background:transparent;border:1px solid #343a40;border-radius:4px;box-sizing:border-box;"></div>
<div class="r" style="left:1858px;top:686px;width:30px;height:29px;background:#343a40;border-radius:4px;"></div>
<svg class="r" style="left:1761px;top:686px" width="29" height="29" viewBox="0 0 29 29"><rect x="10" y="8" width="8" height="2.4" rx="0.6" fill="#000"/><rect x="7" y="11" width="14" height="6.2" rx="1.6" fill="#000"/><rect x="10" y="14.5" width="8" height="5.2" rx="1.2" fill="#000"/><rect x="11" y="15.3" width="6" height="2.8" rx="0.3" fill="#fff"/><rect x="19.3" y="12.2" width="0.8" height="1.4" fill="#ddd"/></svg>
<svg class="r" style="left:1793px;top:686px" width="29" height="29" viewBox="0 0 29 29" shape-rendering="crispEdges"><path d="M9 8 H16 V9 H10 V20 H18 V11 H19 V21 H9Z" fill="#111"/><path d="M16 8 L19 11 L16 11Z" fill="#000" shape-rendering="auto"/><rect x="8" y="13" width="12" height="4.6" fill="#000"/><path d="M9.6 16.4 V14 H10.8 Q11.6 14 11.6 14.7 Q11.6 15.4 10.8 15.4 H9.6 M12.6 16.4 V14 H13.6 Q14.8 14 14.8 15.2 Q14.8 16.4 13.6 16.4Z M16 16.4 V14 H17.8 M16 15.2 H17.4" stroke="#e8e8e8" stroke-width="0.8" fill="none" shape-rendering="auto"/></svg>
<svg class="r" style="left:1826px;top:686px" width="29" height="29" viewBox="0 0 29 29"><path d="M10 8 H15.6 L19 11.6 V19.6 Q19 20.6 18 20.6 H10 Q9 20.6 9 19.6 V9 Q9 8 10 8Z" fill="#000"/><path d="M12 12.2 L16.2 17.9 M16.2 12.2 L12 17.9" stroke="#dcdcdc" stroke-width="1.3"/></svg>
<svg class="r" style="left:1858px;top:686px" width="30" height="29" viewBox="0 0 30 29"><path d="M9 14 H19.2 M14.6 9.3 L19.3 14 L14.6 18.7" stroke="#e6e6e6" stroke-width="1.6" fill="none"/></svg>
<div class="r" style="left:0px;top:737px;width:1899px;height:68px;background:#f0f0f0;"></div>
<div class="r" style="left:0px;top:805px;width:1899px;height:3px;background:#ffffff;"></div>
<div class="r" style="left:0px;top:806px;width:1899px;height:1px;background:#000000;"></div>
<div class="t" style="left:11.36px;top:763px;font-size:15px;color:#000;text-decoration:underline;text-underline-offset:1px;text-decoration-thickness:1.3px;transform:scaleX(0.9095);">2301009052710</div>
<div class="t" style="left:137.47px;top:763px;font-size:15px;color:#000;text-decoration:underline;text-underline-offset:1px;text-decoration-thickness:1.3px;transform:scaleX(0.8597);">ORDRSP</div>
<div class="t" style="left:215.48px;top:763px;font-size:15px;color:#000;text-decoration:underline;text-underline-offset:1px;text-decoration-thickness:1.3px;transform:scaleX(0.8931);">INVOICE</div>
<div class="t" style="left:293.35px;top:763px;font-size:15px;color:#000;text-decoration:underline;text-underline-offset:1px;text-decoration-thickness:1.3px;transform:scaleX(0.8885);">DESADV</div>
<div class="t" style="left:370.61px;top:756px;font-size:15px;color:#212529;transform:scaleX(0.9748);">12-01-23</div>
<div class="t" style="left:371.53px;top:773px;font-size:13px;color:#828282;transform:scaleX(0.9539);">00:00:00</div>
<div class="t" style="left:483.21px;top:756px;font-size:15px;color:#212529;transform:scaleX(0.9783);">16-01-23</div>
<div class="t" style="left:483.73px;top:773px;font-size:13px;color:#828282;transform:scaleX(0.9599);">23:59:00</div>
<div class="t" style="left:617.42px;top:756px;font-size:15px;color:#212529;transform:scaleX(0.9602);">12-01-23</div>
<div class="t" style="left:617.55px;top:773px;font-size:13px;color:#828282;transform:scaleX(0.9531);">17:10:05</div>
<div class="t" style="left:767.31px;top:756px;font-size:15px;color:#212529;transform:scaleX(0.9593);">Торговый зал АФ №21</div>
<div class="t" style="left:767.04px;top:773px;font-size:13px;color:#828282;transform:scaleX(1.0123);">г.Алматы, Медеуский район, микрорайон Самал-3, дом 1</div>
<div class="t" style="left:1249.59px;top:748px;font-size:15px;color:#212529;transform:scaleX(0.9525);">ТОО «Magnum</div>
<div class="t" style="left:1248.70px;top:763px;font-size:15px;color:#212529;transform:scaleX(0.9181);">Cash&amp;Carry».</div>
<div class="t" style="left:1249.49px;top:781px;font-size:13px;color:#828282;transform:scaleX(0.9815);">4870206260043</div>
<div class="r" style="left:1452px;top:765px;width:13px;height:13px;border-radius:50%;background:#55d855;border:1px solid #5a5a5a;box-sizing:border-box"></div>
<div class="r" style="left:1512px;top:750px;width:154px;height:43px;background:#bff4fc;border-radius:5px;"></div>
<div class="t" style="left:1523.43px;top:756px;font-size:15px;color:#087990;transform:scaleX(0.9655);">Загружено с</div>
<div class="t" style="left:1523.28px;top:771px;font-size:15px;color:#087990;transform:scaleX(0.9649);">покупателя</div>
<div class="t" style="left:1688.15px;top:756px;font-size:15px;color:#212529;transform:scaleX(1.0068);">По-</div>
<div class="t" style="left:1689.09px;top:771px;font-size:15px;color:#212529;transform:scaleX(0.9596);">умол</div>
<div class="r" style="left:1761px;top:757px;width:29px;height:29px;background:transparent;border:1px solid #343a40;border-radius:4px;box-sizing:border-box;"></div>
<div class="r" style="left:1793px;top:757px;width:29px;height:29px;background:transparent;border:1px solid #343a40;border-radius:4px;box-sizing:border-box;"></div>
<div class="r" style="left:1826px;top:757px;width:29px;height:29px;background:transparent;border:1px solid #343a40;border-radius:4px;box-sizing:border-box;"></div>
<div class="r" style="left:1858px;top:757px;width:30px;height:29px;background:#343a40;border-radius:4px;"></div>
<svg class="r" style="left:1761px;top:757px" width="29" height="29" viewBox="0 0 29 29"><rect x="10" y="8" width="8" height="2.4" rx="0.6" fill="#000"/><rect x="7" y="11" width="14" height="6.2" rx="1.6" fill="#000"/><rect x="10" y="14.5" width="8" height="5.2" rx="1.2" fill="#000"/><rect x="11" y="15.3" width="6" height="2.8" rx="0.3" fill="#fff"/><rect x="19.3" y="12.2" width="0.8" height="1.4" fill="#ddd"/></svg>
<svg class="r" style="left:1793px;top:757px" width="29" height="29" viewBox="0 0 29 29" shape-rendering="crispEdges"><path d="M9 8 H16 V9 H10 V20 H18 V11 H19 V21 H9Z" fill="#111"/><path d="M16 8 L19 11 L16 11Z" fill="#000" shape-rendering="auto"/><rect x="8" y="13" width="12" height="4.6" fill="#000"/><path d="M9.6 16.4 V14 H10.8 Q11.6 14 11.6 14.7 Q11.6 15.4 10.8 15.4 H9.6 M12.6 16.4 V14 H13.6 Q14.8 14 14.8 15.2 Q14.8 16.4 13.6 16.4Z M16 16.4 V14 H17.8 M16 15.2 H17.4" stroke="#e8e8e8" stroke-width="0.8" fill="none" shape-rendering="auto"/></svg>
<svg class="r" style="left:1826px;top:757px" width="29" height="29" viewBox="0 0 29 29"><path d="M10 8 H15.6 L19 11.6 V19.6 Q19 20.6 18 20.6 H10 Q9 20.6 9 19.6 V9 Q9 8 10 8Z" fill="#000"/><path d="M12 12.2 L16.2 17.9 M16.2 12.2 L12 17.9" stroke="#dcdcdc" stroke-width="1.3"/></svg>
<svg class="r" style="left:1858px;top:757px" width="30" height="29" viewBox="0 0 30 29"><path d="M9 14 H19.2 M14.6 9.3 L19.3 14 L14.6 18.7" stroke="#e6e6e6" stroke-width="1.6" fill="none"/></svg>
<div class="r" style="left:0px;top:808px;width:1899px;height:67px;background:#f8f8f8;"></div>
<div class="r" style="left:0px;top:875px;width:1899px;height:3px;background:#ffffff;"></div>
<div class="r" style="left:0px;top:876px;width:1899px;height:1px;background:#000000;"></div>
<div class="t" style="left:11.36px;top:833px;font-size:15px;color:#000;text-decoration:underline;text-underline-offset:1px;text-decoration-thickness:1.3px;transform:scaleX(0.9095);">2301009037941</div>
<div class="t" style="left:137.47px;top:833px;font-size:15px;color:#000;text-decoration:underline;text-underline-offset:1px;text-decoration-thickness:1.3px;transform:scaleX(0.8597);">ORDRSP</div>
<div class="t" style="left:215.48px;top:833px;font-size:15px;color:#000;text-decoration:underline;text-underline-offset:1px;text-decoration-thickness:1.3px;transform:scaleX(0.8930);">INVOICE</div>
<div class="t" style="left:293.35px;top:833px;font-size:15px;color:#000;text-decoration:underline;text-underline-offset:1px;text-decoration-thickness:1.3px;transform:scaleX(0.8886);">DESADV</div>
<div class="t" style="left:370.60px;top:826px;font-size:15px;color:#212529;transform:scaleX(0.9726);">12-01-23</div>
<div class="t" style="left:371.54px;top:843px;font-size:13px;color:#828282;transform:scaleX(0.9532);">00:00:00</div>
<div class="t" style="left:483.20px;top:826px;font-size:15px;color:#212529;transform:scaleX(0.9785);">13-01-23</div>
<div class="t" style="left:483.73px;top:843px;font-size:13px;color:#828282;transform:scaleX(0.9597);">23:59:00</div>
<div class="t" style="left:617.39px;top:826px;font-size:15px;color:#212529;transform:scaleX(0.9604);">12-01-23</div>
<div class="t" style="left:617.56px;top:843px;font-size:13px;color:#828282;transform:scaleX(0.9485);">16:10:04</div>
<div class="t" style="left:767.34px;top:826px;font-size:15px;color:#212529;transform:scaleX(0.9589);">Торговый зал АФ №37</div>
<div class="t" style="left:767.50px;top:843px;font-size:13px;color:#828282;transform:scaleX(0.9897);">A05M0M2, Алматы, ЖК Евразия, ул. Масанчи 23/1</div>
<div class="t" style="left:1249.22px;top:818px;font-size:15px;color:#212529;transform:scaleX(0.9522);">ТОО «Magnum</div>
<div class="t" style="left:1248.73px;top:833px;font-size:15px;color:#212529;transform:scaleX(0.9180);">Cash&amp;Carry».</div>
<div class="t" style="left:1249.53px;top:851px;font-size:13px;color:#828282;transform:scaleX(0.9809);">4870206260043</div>
<div class="r" style="left:1452px;top:835px;width:13px;height:13px;border-radius:50%;background:#55d855;border:1px solid #5a5a5a;box-sizing:border-box"></div>
<div class="r" style="left:1512px;top:820px;width:154px;height:43px;background:#bff4fc;border-radius:5px;"></div>
<div class="t" style="left:1523.43px;top:826px;font-size:15px;color:#087990;transform:scaleX(0.9655);">Загружено с</div>
<div class="t" style="left:1523.28px;top:841px;font-size:15px;color:#087990;transform:scaleX(0.9649);">покупателя</div>
<div class="t" style="left:1688.16px;top:826px;font-size:15px;color:#212529;transform:scaleX(1.0070);">По-</div>
<div class="t" style="left:1689.06px;top:841px;font-size:15px;color:#212529;transform:scaleX(0.9605);">умол</div>
<div class="r" style="left:1761px;top:827px;width:29px;height:29px;background:transparent;border:1px solid #343a40;border-radius:4px;box-sizing:border-box;"></div>
<div class="r" style="left:1793px;top:827px;width:29px;height:29px;background:transparent;border:1px solid #343a40;border-radius:4px;box-sizing:border-box;"></div>
<div class="r" style="left:1826px;top:827px;width:29px;height:29px;background:transparent;border:1px solid #343a40;border-radius:4px;box-sizing:border-box;"></div>
<div class="r" style="left:1858px;top:827px;width:30px;height:29px;background:#343a40;border-radius:4px;"></div>
<svg class="r" style="left:1761px;top:827px" width="29" height="29" viewBox="0 0 29 29"><rect x="10" y="8" width="8" height="2.4" rx="0.6" fill="#000"/><rect x="7" y="11" width="14" height="6.2" rx="1.6" fill="#000"/><rect x="10" y="14.5" width="8" height="5.2" rx="1.2" fill="#000"/><rect x="11" y="15.3" width="6" height="2.8" rx="0.3" fill="#fff"/><rect x="19.3" y="12.2" width="0.8" height="1.4" fill="#ddd"/></svg>
<svg class="r" style="left:1793px;top:827px" width="29" height="29" viewBox="0 0 29 29" shape-rendering="crispEdges"><path d="M9 8 H16 V9 H10 V20 H18 V11 H19 V21 H9Z" fill="#111"/><path d="M16 8 L19 11 L16 11Z" fill="#000" shape-rendering="auto"/><rect x="8" y="13" width="12" height="4.6" fill="#000"/><path d="M9.6 16.4 V14 H10.8 Q11.6 14 11.6 14.7 Q11.6 15.4 10.8 15.4 H9.6 M12.6 16.4 V14 H13.6 Q14.8 14 14.8 15.2 Q14.8 16.4 13.6 16.4Z M16 16.4 V14 H17.8 M16 15.2 H17.4" stroke="#e8e8e8" stroke-width="0.8" fill="none" shape-rendering="auto"/></svg>
<svg class="r" style="left:1826px;top:827px" width="29" height="29" viewBox="0 0 29 29"><path d="M10 8 H15.6 L19 11.6 V19.6 Q19 20.6 18 20.6 H10 Q9 20.6 9 19.6 V9 Q9 8 10 8Z" fill="#000"/><path d="M12 12.2 L16.2 17.9 M16.2 12.2 L12 17.9" stroke="#dcdcdc" stroke-width="1.3"/></svg>
<svg class="r" style="left:1858px;top:827px" width="30" height="29" viewBox="0 0 30 29"><path d="M9 14 H19.2 M14.6 9.3 L19.3 14 L14.6 18.7" stroke="#e6e6e6" stroke-width="1.6" fill="none"/></svg>
<div class="r" style="left:0px;top:878px;width:1899px;height:68px;background:#f0f0f0;"></div>
<div class="r" style="left:0px;top:946px;width:1899px;height:3px;background:#ffffff;"></div>
<div class="r" style="left:0px;top:947px;width:1899px;height:1px;background:#000000;"></div>
<div class="t" style="left:11.36px;top:904px;font-size:15px;color:#000;text-decoration:underline;text-underline-offset:1px;text-decoration-thickness:1.3px;transform:scaleX(0.9313);">2301009052756</div>
<div class="t" style="left:137.47px;top:904px;font-size:15px;color:#000;text-decoration:underline;text-underline-offset:1px;text-decoration-thickness:1.3px;transform:scaleX(0.8597);">ORDRSP</div>
<div class="t" style="left:215.48px;top:904px;font-size:15px;color:#000;text-decoration:underline;text-underline-offset:1px;text-decoration-thickness:1.3px;transform:scaleX(0.8931);">INVOICE</div>
<div class="t" style="left:293.35px;top:904px;font-size:15px;color:#000;text-decoration:underline;text-underline-offset:1px;text-decoration-thickness:1.3px;transform:scaleX(0.8885);">DESADV</div>
<div class="t" style="left:370.61px;top:897px;font-size:15px;color:#212529;transform:scaleX(0.9748);">12-01-23</div>
<div class="t" style="left:371.53px;top:914px;font-size:13px;color:#828282;transform:scaleX(0.9539);">00:00:00</div>
<div class="t" style="left:483.21px;top:897px;font-size:15px;color:#212529;transform:scaleX(0.9783);">13-01-23</div>
<div class="t" style="left:483.73px;top:914px;font-size:13px;color:#828282;transform:scaleX(0.9599);">23:59:00</div>
<div class="t" style="left:617.42px;top:897px;font-size:15px;color:#212529;transform:scaleX(0.9602);">12-01-23</div>
<div class="t" style="left:617.57px;top:914px;font-size:13px;color:#828282;transform:scaleX(0.9484);">15:10:04</div>
<div class="t" style="left:767.31px;top:897px;font-size:15px;color:#212529;transform:scaleX(0.9591);">Торговый зал АФ №32</div>
<div class="t" style="left:767.40px;top:914px;font-size:13px;color:#828282;transform:scaleX(0.9753);">A10F3M5, Алматы, мкр. Таугуль, д. 16</div>
<div class="t" style="left:1249.59px;top:889px;font-size:15px;color:#212529;transform:scaleX(0.9525);">ТОО «Magnum</div>
<div class="t" style="left:1248.70px;top:904px;font-size:15px;color:#212529;transform:scaleX(0.9181);">Cash&amp;Carry».</div>
<div class="t" style="left:1249.49px;top:922px;font-size:13px;color:#828282;transform:scaleX(0.9815);">4870206260043</div>
<div class="r" style="left:1452px;top:906px;width:13px;height:13px;border-radius:50%;background:#55d855;border:1px solid #5a5a5a;box-sizing:border-box"></div>
<div class="r" style="left:1512px;top:891px;width:154px;height:43px;background:#bff4fc;border-radius:5px;"></div>
<div class="t" style="left:1523.43px;top:897px;font-size:15px;color:#087990;transform:scaleX(0.9655);">Загружено с</div>
<div class="t" style="left:1523.28px;top:912px;font-size:15px;color:#087990;transform:scaleX(0.9649);">покупателя</div>
<div class="t" style="left:1688.15px;top:897px;font-size:15px;color:#212529;transform:scaleX(1.0068);">По-</div>
<div class="t" style="left:1689.09px;top:912px;font-size:15px;color:#212529;transform:scaleX(0.9596);">умол</div>
<div class="r" style="left:1761px;top:898px;width:29px;height:29px;background:transparent;border:1px solid #343a40;border-radius:4px;box-sizing:border-box;"></div>
<div class="r" style="left:1793px;top:898px;width:29px;height:29px;background:transparent;border:1px solid #343a40;border-radius:4px;box-sizing:border-box;"></div>
<div class="r" style="left:1826px;top:898px;width:29px;height:29px;background:transparent;border:1px solid #343a40;border-radius:4px;box-sizing:border-box;"></div>
<div class="r" style="left:1858px;top:898px;width:30px;height:29px;background:#343a40;border-radius:4px;"></div>
<svg class="r" style="left:1761px;top:898px" width="29" height="29" viewBox="0 0 29 29"><rect x="10" y="8" width="8" height="2.4" rx="0.6" fill="#000"/><rect x="7" y="11" width="14" height="6.2" rx="1.6" fill="#000"/><rect x="10" y="14.5" width="8" height="5.2" rx="1.2" fill="#000"/><rect x="11" y="15.3" width="6" height="2.8" rx="0.3" fill="#fff"/><rect x="19.3" y="12.2" width="0.8" height="1.4" fill="#ddd"/></svg>
<svg class="r" style="left:1793px;top:898px" width="29" height="29" viewBox="0 0 29 29" shape-rendering="crispEdges"><path d="M9 8 H16 V9 H10 V20 H18 V11 H19 V21 H9Z" fill="#111"/><path d="M16 8 L19 11 L16 11Z" fill="#000" shape-rendering="auto"/><rect x="8" y="13" width="12" height="4.6" fill="#000"/><path d="M9.6 16.4 V14 H10.8 Q11.6 14 11.6 14.7 Q11.6 15.4 10.8 15.4 H9.6 M12.6 16.4 V14 H13.6 Q14.8 14 14.8 15.2 Q14.8 16.4 13.6 16.4Z M16 16.4 V14 H17.8 M16 15.2 H17.4" stroke="#e8e8e8" stroke-width="0.8" fill="none" shape-rendering="auto"/></svg>
<svg class="r" style="left:1826px;top:898px" width="29" height="29" viewBox="0 0 29 29"><path d="M10 8 H15.6 L19 11.6 V19.6 Q19 20.6 18 20.6 H10 Q9 20.6 9 19.6 V9 Q9 8 10 8Z" fill="#000"/><path d="M12 12.2 L16.2 17.9 M16.2 12.2 L12 17.9" stroke="#dcdcdc" stroke-width="1.3"/></svg>
<svg class="r" style="left:1858px;top:898px" width="30" height="29" viewBox="0 0 30 29"><path d="M9 14 H19.2 M14.6 9.3 L19.3 14 L14.6 18.7" stroke="#e6e6e6" stroke-width="1.6" fill="none"/></svg>
</body></html>
